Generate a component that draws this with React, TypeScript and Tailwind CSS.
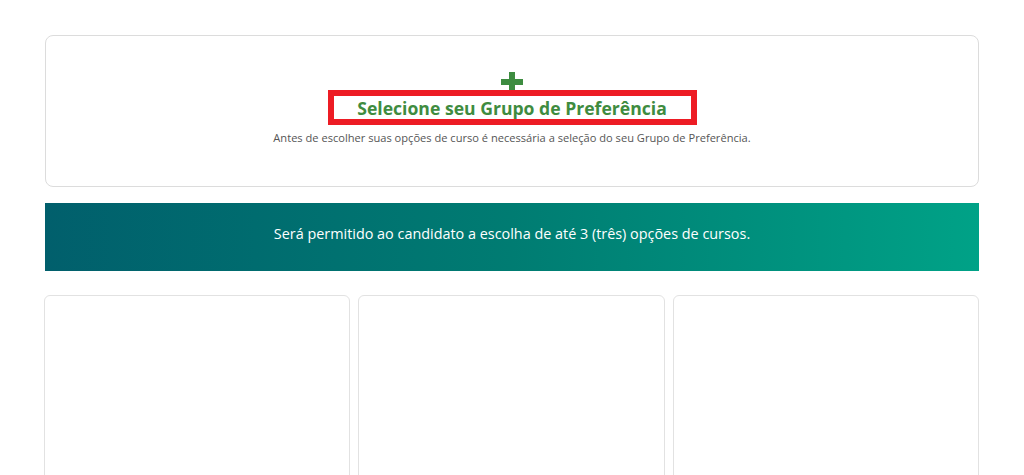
import React from "react";

export default function App() {
  return (
    <div className="min-h-[475px] w-[1024px] bg-white overflow-hidden" style={{ fontFamily: '"Open Sans", "Noto Sans", sans-serif' }}>
      <div className="flex flex-col px-[45px] pt-[35px]">
        <div className="flex h-[152px] flex-col items-center rounded-[8px] border border-[#dcdcdc] pt-[36px]">
          <svg width="22" height="20" viewBox="0 0 22 20" className="mb-[-2px]">
            <rect x="8" y="0" width="6" height="20" fill="#3d8c40" />
            <rect x="0" y="7" width="22" height="6" fill="#3d8c40" />
          </svg>
          <div className="flex h-[35px] w-[369px] items-center justify-center border-[6px] border-[#ed1c24] pt-[3px]">
            <span className="text-[17.6px] font-bold leading-none text-[#3f8c3f]">Selecione seu Grupo de Preferência</span>
          </div>
          <p className="mt-[5px] text-[11.1px] text-[#555]">Antes de escolher suas opções de curso é necessária a seleção do seu Grupo de Preferência.</p>
        </div>
        <div className="mt-[16px] flex h-[68px] items-center justify-center bg-gradient-to-r from-[#015f6c] via-[#007c72] to-[#00a287] pb-[6px]">
          <span className="text-[14.4px] text-white">Será permitido ao candidato a escolha de até 3 (três) opções de cursos.</span>
        </div>
        <div className="mt-[24px] ml-[-1px] grid grid-cols-3 gap-[8px]">
          <div className="h-[200px] rounded-[6px] border border-[#e2e2e2]" />
          <div className="h-[200px] rounded-[6px] border border-[#e2e2e2]" />
          <div className="h-[200px] rounded-[6px] border border-[#e2e2e2]" />
        </div>
      </div>
    </div>
  );
}
